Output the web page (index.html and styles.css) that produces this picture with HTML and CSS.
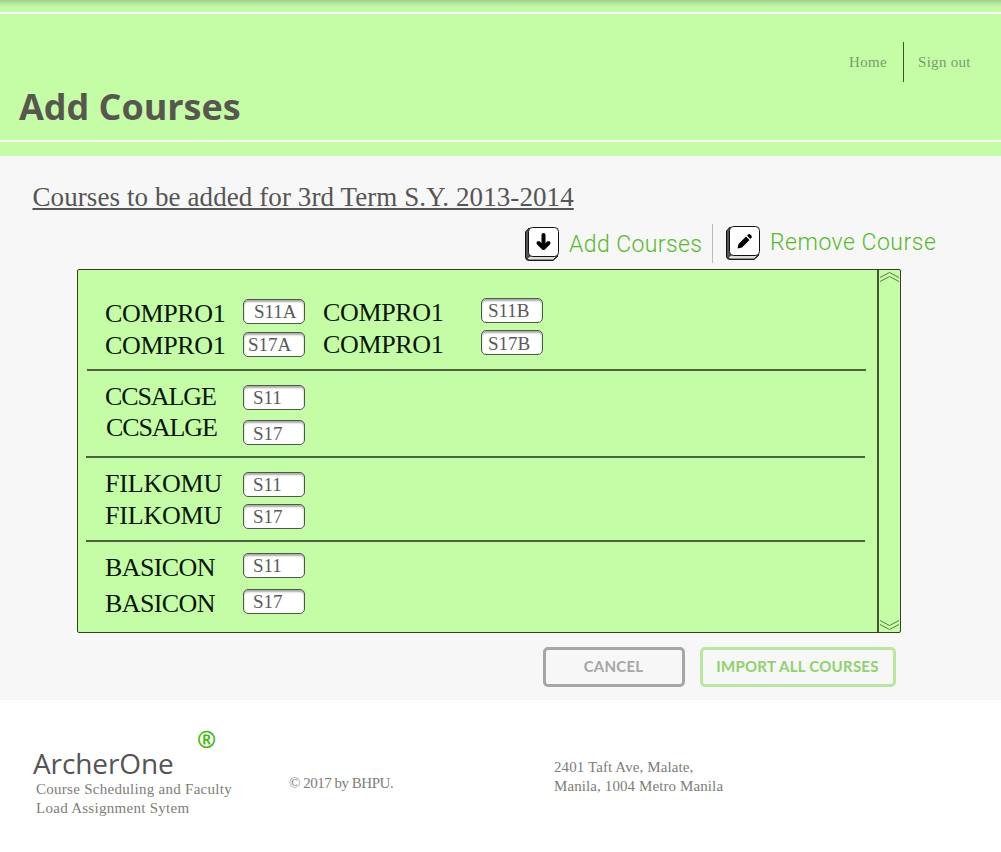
FILE: index.html
```html
<!DOCTYPE html>
<html lang="en">
<head>
<meta charset="utf-8">
<title>Add Courses</title>
<link rel="stylesheet" href="styles.css">
</head>
<body>
<header class="header">
  <div class="banner">
    <h1 class="page-title">Add Courses</h1>
    <nav class="nav"><a class="nav-link home">Home</a><a class="nav-link signout">Sign out</a></nav>
  </div>
</header>
<main class="main">
  <h2 class="term"><span>Courses to be added for 3rd Term S.Y. 2013-2014</span></h2>
  <div class="actions">
    <a class="action add">
      <svg class="key" width="36" height="36" viewBox="0 0 36 36"><path d="M5 2 1.500 6V31Q1.500 34.500 5 34.500H29L34 30Z" fill="#555" stroke="#111"/><path d="M3 32.500 6 30H33L29 34H5Z" fill="#ddd" stroke="#222" stroke-width=".8"/><rect x="4.500" y="1.500" width="30" height="29" rx="4" fill="#fff" stroke="#111"/><path d="M19.500 9V21M14.500 17l5 5 5-5" fill="none" stroke="#000" stroke-width="4" stroke-linecap="round" stroke-linejoin="round"/></svg>
      <span>Add Courses</span></a>
    <a class="action remove">
      <svg class="key" width="36" height="36" viewBox="0 0 36 36"><path d="M5 2 1.500 6V31Q1.500 34.500 5 34.500H29L34 30Z" fill="#555" stroke="#111"/><path d="M3 32.500 6 30H33L29 34H5Z" fill="#ddd" stroke="#222" stroke-width=".8"/><rect x="4.500" y="1.500" width="30" height="29" rx="4" fill="#fff" stroke="#111"/><path d="M12.500 23.500l1-4.500 7.500-7.500 3.500 3.500-7.500 7.500zM22 10.500l1.500-1.200q1-.6 2 .4l1 1q.8 1 0 2L25.300 14z"/></svg>
      <span>Remove Course</span></a>
  </div>
  <section class="panel">
    <div class="groups">
      <div class="group g1">
        <div class="names"><span>COMPRO1</span><span>COMPRO1</span></div>
        <div class="tags"><span class="tag shifted">S11A</span><span class="tag tight">S17A</span></div>
        <div class="names second"><span>COMPRO1</span><span>COMPRO1</span></div>
        <div class="tags second"><span class="tag near">S11B</span><span class="tag near low">S17B</span></div>
      </div>
      <div class="group g2">
        <div class="names"><span>CCSALGE</span><span class="nudge">CCSALGE</span></div>
        <div class="tags"><span class="tag">S11</span><span class="tag low">S17</span></div>
      </div>
      <div class="group g3">
        <div class="names"><span>FILKOMU</span><span>FILKOMU</span></div>
        <div class="tags"><span class="tag">S11</span><span class="tag">S17</span></div>
      </div>
      <div class="group g4">
        <div class="names"><span>BASICON</span><span>BASICON</span></div>
        <div class="tags"><span class="tag">S11</span><span class="tag">S17</span></div>
      </div>
    </div>
    <div class="scrollbar">
      <svg width="21" height="12" viewBox="0 0 21 12"><path d="M1 7.500 10.500 2.500 20 7.500M1 11.500 10.500 6.500 20 11.500"/></svg>
      <svg width="21" height="12" viewBox="0 0 21 12"><path d="M1 .5 10.500 5.500 20 .5M1 4.500 10.500 9.500 20 4.500"/></svg>
    </div>
  </section>
  <div class="buttons"><button class="btn cancel">CANCEL</button><button class="btn import">IMPORT ALL COURSES</button></div>
</main>
<footer class="footer">
  <div class="brand">
    <div class="mark">®</div>
    <div class="brand-name">ArcherOne</div>
    <p class="note tagline">Course Scheduling and Faculty<br>Load Assignment Sytem</p>
  </div>
  <p class="note copyright">© 2017 by BHPU.</p>
  <p class="note address">2401 Taft Ave, Malate,<br>Manila, 1004 Metro Manila</p>
</footer>
</body>
</html>
```

FILE: styles.css
```css
* { box-sizing: border-box; }
body { margin: 0; width: 1001px; height: 852px; overflow: hidden; background: #fff; font-family: "Liberation Serif", serif; color: #555; }
h1, h2, p { margin: 0; font-weight: normal; }
.header { height: 156px; padding-top: 12px; background: linear-gradient(#a3cd8b, #bdf3a0 5px, #c5fda7 9px); }
.banner { display: flex; justify-content: space-between; height: 130px; border-top: 2px solid #fff; border-bottom: 2px solid #fff; }
.page-title { padding: 68px 0 0 19px; font: bold 36px/50px "Open Sans", sans-serif; letter-spacing: -.05px; color: #57574f; }
.nav { display: flex; height: 40px; margin: 28px 29px 0 0; }
.nav-link { font-size: 15px; line-height: 40px; letter-spacing: .3px; color: #7c9a6c; }
.home { width: 55px; border-right: 1px solid #3c5130; }
.signout { width: 68px; padding-left: 14px; }
.main { height: 544px; background: #f7f7f7; padding-top: 22px; }
.term { margin-left: 32.500px; height: 36px; font-size: 27px; line-height: 38px; letter-spacing: .09px; text-decoration: underline; text-decoration-thickness: 2px; text-underline-offset: 2px; }
.actions { display: flex; margin: 10px 0 0 524px; height: 39px; }
.action { display: flex; color: #55bb2a; font: 300 23px/41px Roboto, sans-serif; letter-spacing: .4px; }
.key { flex: none; margin-top: 2px; }
.add { width: 189px; border-right: 1px solid #bbb; gap: 9px; }
.remove { padding-left: 12px; gap: 9px; line-height: 37px; letter-spacing: .5px; }
.remove .key { margin-top: 1px; }
.panel { display: flex; width: 824px; height: 364px; margin: 6px 0 0 77px; border: 1px solid #353f22; border-radius: 2px; background: #c5fda7; }
.groups { width: 799px; padding-left: 8px; }
.group { display: flex; width: 779px; border-bottom: 2px solid #4c633d; }
.g1 { height: 101px; margin-left: 1px; }
.g2 { height: 87px; }
.g3 { height: 84px; }
.g4 { height: 90px; border: 0; }
.names { display: flex; flex-direction: column; width: 157px; padding-left: 19px; color: #081506; font-size: 26px; line-height: 25px; }
.tags { display: flex; flex-direction: column; width: 62px; }
.tag { height: 25px; padding-left: 9px; border: 1px solid #4e5a48; border-radius: 5px; background: #fff; box-shadow: inset 0 2px 2px #aaa; color: #5a5a5a; font-size: 19px; line-height: 24px; }
.near { padding-left: 6px; }
.shifted { padding-left: 10px; }
.tight { padding-left: 4px; }
.low { line-height: 25px; }
.nudge { padding-left: 1px; }
.g1 .names { width: 156px; padding: 31px 0 0 18px; gap: 7px; letter-spacing: -.35px; }
.g1 .names.second { padding-top: 30px; width: 176px; }
.g1 .tags { padding-top: 29px; gap: 8px; }
.g1 .tags.second { padding-top: 28px; gap: 7px; }
.g2 .names { padding-top: 13px; gap: 6px; letter-spacing: -1.1px; }
.g2 .tags { padding-top: 14px; gap: 10px; }
.g3 .names { padding-top: 13px; gap: 7px; letter-spacing: -.2px; }
.g3 .tags { padding-top: 14px; gap: 7px; }
.g4 .names { padding-top: 13px; gap: 11px; letter-spacing: -.6px; }
.g4 .tags { padding-top: 11px; gap: 11px; }
.scrollbar { display: flex; flex-direction: column; justify-content: space-between; width: 23px; border-left: 2px solid #465236; }
.scrollbar path { fill: none; stroke: #5c7d49; }
.buttons { display: flex; gap: 15px; margin: 14px 0 0 543px; }
.btn { height: 40px; padding: 0 1px 2px 0; border: 3px solid #a6a6a6; border-radius: 5px; background: transparent; color: #a6a6a6; font: bold 15px/32px Lato, sans-serif; letter-spacing: .25px; }
.cancel { width: 142px; }
.import { width: 196px; border-color: #b8e89d; color: #8dd26c; }
.footer { display: flex; align-items: flex-start; }
.brand { width: 289px; padding-left: 33px; }
.mark { padding: 28px 0 0 164px; height: 43px; font: bold 23px/22px "Open Sans", sans-serif; color: #3eba0d; }
.brand-name { height: 37px; font: 28px/40px "Open Sans", sans-serif; letter-spacing: -.1px; color: #555; }
.note { font-size: 15px; line-height: 19px; color: #7d7d75; }
.tagline { padding-left: 3px; letter-spacing: .28px; }
.copyright { width: 265px; padding-top: 74px; letter-spacing: -.48px; }
.address { padding-top: 58px; letter-spacing: .1px; }
```
